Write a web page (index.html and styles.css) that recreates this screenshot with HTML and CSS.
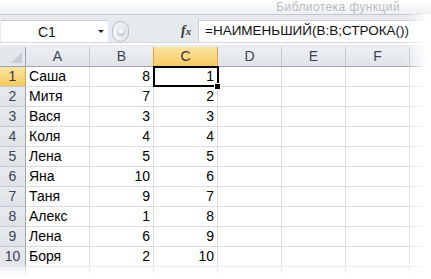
FILE: index.html
```html
<!DOCTYPE html>
<html>
<head>
<meta charset="utf-8">
<link rel="stylesheet" href="styles.css">
</head>
<body>
<div class="app">
  <div class="ribbon"><span class="group-label">Библиотека функций</span></div>
  <div class="fbar">
    <div class="namebox"><span class="name">C1</span><span class="arrow"></span></div>
    <div class="grip"><span class="dot"></span></div>
    <div class="fx">f<span class="x">x</span></div>
    <div class="formula">=НАИМЕНЬШИЙ(B:B;СТРОКА())</div>
  </div>
  <div class="sep"></div>
  <div class="sheet">
    <div class="row head">
      <div class="rh corner"><span class="tri"></span></div>
      <div class="ch">A</div><div class="ch">B</div><div class="ch sel">C</div><div class="ch">D</div><div class="ch">E</div><div class="ch">F</div><div class="ch"></div>
    </div>
    <div class="row"><div class="rh sel">1</div><div class="c t">Саша</div><div class="c n">8</div><div class="c n active">1<span class="handle"></span></div><div class="c"></div><div class="c"></div><div class="c"></div><div class="c"></div></div>
    <div class="row"><div class="rh">2</div><div class="c t">Митя</div><div class="c n">7</div><div class="c n">2</div><div class="c"></div><div class="c"></div><div class="c"></div><div class="c"></div></div>
    <div class="row"><div class="rh">3</div><div class="c t">Вася</div><div class="c n">3</div><div class="c n">3</div><div class="c"></div><div class="c"></div><div class="c"></div><div class="c"></div></div>
    <div class="row"><div class="rh">4</div><div class="c t">Коля</div><div class="c n">4</div><div class="c n">4</div><div class="c"></div><div class="c"></div><div class="c"></div><div class="c"></div></div>
    <div class="row"><div class="rh">5</div><div class="c t">Лена</div><div class="c n">5</div><div class="c n">5</div><div class="c"></div><div class="c"></div><div class="c"></div><div class="c"></div></div>
    <div class="row"><div class="rh">6</div><div class="c t">Яна</div><div class="c n">10</div><div class="c n">6</div><div class="c"></div><div class="c"></div><div class="c"></div><div class="c"></div></div>
    <div class="row"><div class="rh">7</div><div class="c t">Таня</div><div class="c n">9</div><div class="c n">7</div><div class="c"></div><div class="c"></div><div class="c"></div><div class="c"></div></div>
    <div class="row"><div class="rh">8</div><div class="c t">Алекс</div><div class="c n">1</div><div class="c n">8</div><div class="c"></div><div class="c"></div><div class="c"></div><div class="c"></div></div>
    <div class="row"><div class="rh">9</div><div class="c t">Лена</div><div class="c n">6</div><div class="c n">9</div><div class="c"></div><div class="c"></div><div class="c"></div><div class="c"></div></div>
    <div class="row"><div class="rh">10</div><div class="c t">Боря</div><div class="c n">2</div><div class="c n">10</div><div class="c"></div><div class="c"></div><div class="c"></div><div class="c"></div></div>
    <div class="row"><div class="rh"></div><div class="c"></div><div class="c"></div><div class="c"></div><div class="c"></div><div class="c"></div><div class="c"></div><div class="c"></div></div>
  </div>
  <div class="fade-right"></div>
  <div class="fade-bottom"></div>
</div>
</body>
</html>
```
FILE: styles.css
```css
html, body {
  margin: 0;
  padding: 0;
  background: #fff;
}
.app {
  position: relative;
  width: 431px;
  height: 279px;
  overflow: hidden;
  font-family: "Liberation Sans", Arial, sans-serif;
}
.ribbon {
  height: 14px;
  background: linear-gradient(#ffffff, #eef0f3);
  border-bottom: 1px solid #c3c8cf;
  display: flex;
  justify-content: flex-end;
  align-items: center;
  padding-right: 31px;
}
.group-label {
  font-size: 12px;
  color: #b8bcc2;
  letter-spacing: 0.4px;
}
.fbar {
  background: #e6e9ed;
  display: flex;
  align-items: flex-start;
  padding-top: 5px;
  box-sizing: border-box;
  height: 27px;
}
.namebox {
  width: 107px;
  height: 22px;
  margin-left: 1px;
  background: #fff;
  border-top: 1px solid #c8ccd2;
  box-sizing: border-box;
  display: flex;
  align-items: center;
  position: relative;
}
.name {
  font-size: 14px;
  color: #111;
  margin-left: 37px;
}
.arrow {
  position: absolute;
  left: 97px;
  top: 9px;
  border-left: 3px solid transparent;
  border-right: 3px solid transparent;
  border-top: 3px solid #222;
}
.grip {
  width: 15px;
  height: 19px;
  margin-top: 1px;
  margin-left: 4px;
  border-radius: 10px;
  background: linear-gradient(90deg, #f3f4f6, #e2e5e9);
  border: 1px solid #b9bec5;
  display: flex;
  align-items: center;
  justify-content: center;
}
.dot {
  width: 8px;
  height: 8px;
  border-radius: 50%;
  background: radial-gradient(circle at 50% 35%, #f4f5f6 0 2px, #c7cbd0 4px);
}
.fx {
  margin-left: 52px;
  margin-top: 3px;
  font-family: "Liberation Serif", serif;
  font-style: italic;
  font-weight: bold;
  font-size: 14px;
  color: #3a3a3a;
  width: 17px;
}
.fx .x {
  font-size: 11px;
}
.formula {
  flex: 1;
  height: 22px;
  background: #fff;
  border-top: 1px solid #c8ccd2;
  border-left: 1px solid #c8ccd2;
  box-sizing: border-box;
  font-size: 13.5px;
  line-height: 20px;
  padding-left: 6px;
  color: #111;
  white-space: nowrap;
}
.sep {
  height: 5px;
  background: linear-gradient(#d4d8de 0 1px, #ffffff 1px 3px, #e8eaee 3px);
}
.sheet {
  display: flex;
  flex-direction: column;
}
.row {
  display: flex;
  height: 20px;
  border-bottom: 1px solid #dadcdd;
  box-sizing: border-box;
}
.row.head {
  height: 20px;
  border-bottom: 1px solid #9ea5ae;
  background: linear-gradient(#eceff3, #e0e4e9);
}
.rh {
  width: 26px;
  flex: none;
  box-sizing: border-box;
  border-right: 1px solid #9ea5ae;
  background: linear-gradient(#e6e9ed, #dfe2e7);
  color: #3b4453;
  font-size: 14px;
  text-align: center;
  line-height: 19px;
  border-bottom: 1px solid #c5cad1;
  margin-bottom: -1px;
}
.rh.sel {
  background: linear-gradient(#fbe3a1, #f5c95f);
  border-right-color: #e2a830;
  color: #3b3b3b;
}
.rh.corner {
  position: relative;
  background: #e3e6ea;
  border-bottom: none;
  margin-bottom: 0;
}
.tri {
  position: absolute;
  right: 3px;
  bottom: 3px;
  border-left: 11px solid transparent;
  border-bottom: 11px solid #c9cdd2;
}
.ch {
  width: 64px;
  flex: none;
  box-sizing: border-box;
  border-right: 1px solid #c5cad1;
  text-align: center;
  font-size: 14px;
  line-height: 19px;
  color: #3b4453;
}
.ch.sel {
  background: linear-gradient(#fbe4a3, #f6ca62);
  border-right-color: #e2a830;
  border-left: 1px solid #e2a830;
  margin-left: -1px;
  width: 65px;
  color: #333;
}
.c {
  width: 64px;
  flex: none;
  box-sizing: border-box;
  border-right: 1px solid #dadcdd;
  font-size: 14px;
  line-height: 19px;
  color: #000;
  white-space: nowrap;
  padding: 0 3px;
}
.c.n {
  text-align: right;
}
.c.active {
  position: relative;
  outline: 2px solid #000;
  outline-offset: -1px;
  z-index: 1;
}
.handle {
  position: absolute;
  right: -4px;
  bottom: -4px;
  width: 5px;
  height: 5px;
  background: #000;
  border: 1px solid #fff;
}
.fade-right {
  position: absolute;
  right: 0;
  top: 14px;
  bottom: 0;
  width: 26px;
  background: linear-gradient(to right, rgba(255,255,255,0), #fff 85%);
  z-index: 5;
}
.fade-bottom {
  position: absolute;
  left: 0;
  right: 0;
  bottom: 0;
  height: 14px;
  background: linear-gradient(rgba(255,255,255,0.3), #fff 80%);
  z-index: 5;
}
```
